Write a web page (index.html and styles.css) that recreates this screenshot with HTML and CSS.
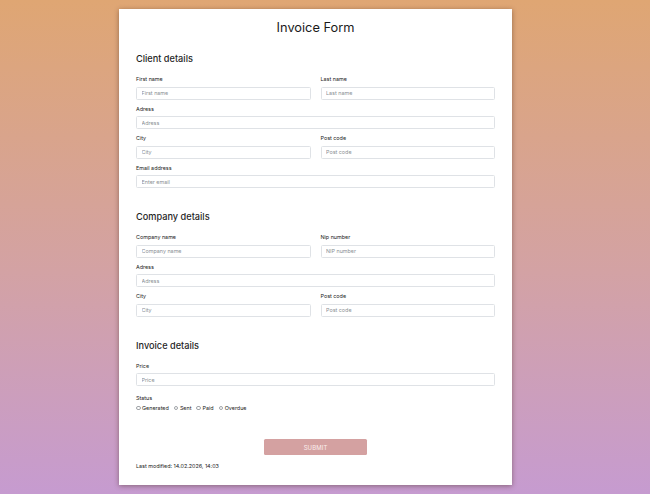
FILE: index.html
```html
<!DOCTYPE html>
<html lang="en">
<head>
<meta charset="utf-8">
<title>Invoice Form</title>
<link rel="stylesheet" href="styles.css">
</head>
<body>
<form class="card">
  <h1 class="title">Invoice Form</h1>

  <section class="section">
    <h2 class="section-title">Client details</h2>
    <div class="row">
      <div class="field"><label class="label">First name</label><input class="input" placeholder="First name"></div>
      <div class="field"><label class="label">Last name</label><input class="input" placeholder="Last name"></div>
    </div>
    <div class="field"><label class="label">Adress</label><input class="input" placeholder="Adress"></div>
    <div class="row">
      <div class="field"><label class="label">City</label><input class="input" placeholder="City"></div>
      <div class="field"><label class="label">Post code</label><input class="input" placeholder="Post code"></div>
    </div>
    <div class="field"><label class="label">Email address</label><input class="input" placeholder="Enter email"></div>
  </section>

  <section class="section">
    <h2 class="section-title">Company details</h2>
    <div class="row">
      <div class="field"><label class="label">Company name</label><input class="input" placeholder="Company name"></div>
      <div class="field"><label class="label">Nip number</label><input class="input" placeholder="NIP number"></div>
    </div>
    <div class="field"><label class="label">Adress</label><input class="input" placeholder="Adress"></div>
    <div class="row">
      <div class="field"><label class="label">City</label><input class="input" placeholder="City"></div>
      <div class="field"><label class="label">Post code</label><input class="input" placeholder="Post code"></div>
    </div>
  </section>

  <section class="section">
    <h2 class="section-title">Invoice details</h2>
    <div class="field"><label class="label">Price</label><input class="input" placeholder="Price"></div>
    <div class="status">
      <div class="label">Status</div>
      <div class="radios">
        <label class="radio"><input type="radio" name="status" class="radio-input">Generated</label>
        <label class="radio"><input type="radio" name="status" class="radio-input">Sent</label>
        <label class="radio"><input type="radio" name="status" class="radio-input">Paid</label>
        <label class="radio"><input type="radio" name="status" class="radio-input">Overdue</label>
      </div>
    </div>
  </section>

  <div class="actions"><button type="button" class="submit">SUBMIT</button></div>
  <p class="modified">Last modified: 14.02.2026, 14:03</p>
</form>
</body>
</html>
```

FILE: styles.css
```css
html, body {
  margin: 0;
  height: 100%;
}
body {
  background: linear-gradient(180deg, #dfa673 0%, #d3a2a4 55%, #c69bd0 100%);
  font-family: Inter, "Noto Sans", sans-serif;
  color: #1f2326;
  overflow: hidden;
}
.card {
  box-sizing: border-box;
  width: 393px;
  height: 476px;
  margin: 9px 0 0 119px;
  padding: 9px 17px 0;
  background: #fff;
  box-shadow: 0 1px 5px rgba(60, 30, 20, 0.45);
}
.title {
  margin: 0;
  font-size: 12.8px;
  line-height: 20px;
  font-weight: 400;
  text-align: center;
  color: #1a1a1a;
}
.section {
  display: flex;
  flex-direction: column;
  margin-top: 18px;
}
.section:first-of-type {
  margin-top: 14px;
}
.section-title {
  margin: 0 0 8px;
  font-size: 9.2px;
  line-height: 14px;
  font-weight: 500;
  color: #1f1f1f;
}
.row {
  display: grid;
  grid-template-columns: 1fr 1fr;
  column-gap: 10px;
}
.field {
  display: flex;
  flex-direction: column;
  margin-bottom: 4px;
}
.label {
  display: block;
  font-size: 5.4px;
  line-height: 10px;
  margin-bottom: 2.5px;
  color: #222;
}
.input {
  box-sizing: border-box;
  height: 13px;
  width: 100%;
  margin: 0;
  padding: 0 4.5px;
  border: 0.6px solid #dfe2e6;
  border-radius: 1.5px;
  font-family: inherit;
  font-size: 5.4px;
  color: #333;
  background: #fff;
  outline: none;
}
.input::placeholder {
  color: #8a8f94;
}
.status {
  margin-top: 3px;
}
.status .label {
  margin-bottom: 0;
}
.radios {
  display: flex;
  gap: 5px;
  font-size: 5.4px;
  line-height: 10px;
  color: #222;
}
.radio {
  display: flex;
  align-items: center;
  gap: 1.5px;
}
.radio-input {
  -webkit-appearance: none;
  appearance: none;
  box-sizing: border-box;
  width: 4.6px;
  height: 4.6px;
  margin: 0;
  border: 0.6px solid #a0a4a8;
  border-radius: 50%;
  background: #fff;
}
.actions {
  display: flex;
  justify-content: center;
  margin-top: 26px;
}
.submit {
  width: 103px;
  height: 16px;
  padding: 0;
  border: none;
  border-radius: 1.5px;
  background: #d4a1a1;
  color: #fbeeee;
  font-family: inherit;
  font-size: 6px;
  letter-spacing: 0.1px;
}
.modified {
  margin: 5.5px 0 0;
  font-size: 5.4px;
  line-height: 10px;
  color: #222;
}
```
